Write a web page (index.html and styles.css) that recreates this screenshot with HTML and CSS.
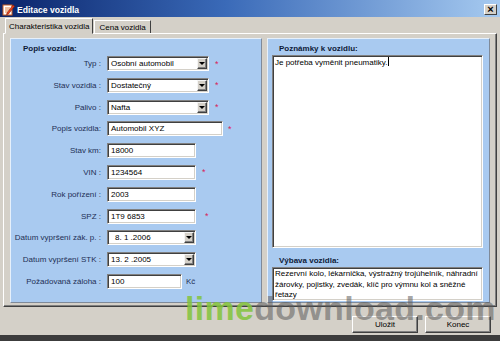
FILE: index.html
```html
<!DOCTYPE html>
<html>

<head>
  <meta charset="utf-8">
  <title>Editace vozidla</title>
  <link rel="stylesheet" href="styles.css">
</head>

<body>
  <div class="window">

    <!-- Title bar -->
    <div class="titlebar">
      <svg class="app-icon" width="13" height="13" viewBox="0 0 13 13">
        <rect x="1" y="2" width="9" height="10" fill="#fff" stroke="#c85a1e"/>
        <line x1="3" y1="5" x2="8" y2="5" stroke="#e08040"/>
        <line x1="3" y1="7" x2="8" y2="7" stroke="#e08040"/>
        <line x1="3" y1="9" x2="6" y2="9" stroke="#e08040"/>
        <path d="M5 10 L11 2 L12.5 3.2 L6.5 11 L4.5 11.8 Z" fill="#e8401c" stroke="#8a2008" stroke-width="0.6"/>
      </svg>
      <span class="title">Editace vozidla</span>
      <span class="close-btn">&times;</span>
    </div>

    <div class="client">
      <!-- Tabs -->
      <div class="tabs">
        <div class="tab active">Charakteristika vozidla</div>
        <div class="tab">Cena vozidla</div>
        <div class="tab-rest"></div>
      </div>

      <div class="tab-page">
        <!-- Left group: vehicle description -->
        <div class="group group-left">
          <div class="group-title">Popis vozidla:</div>
          <div class="form">
            <div class="row">
              <span class="lbl">Typ :</span>
              <div class="field combo w-combo"><span class="val">Osobní automobil</span><span class="drop"></span></div>
              <span class="req">*</span>
            </div>
            <div class="row">
              <span class="lbl">Stav vozidla :</span>
              <div class="field combo w-combo"><span class="val">Dostatečný</span><span class="drop"></span></div>
              <span class="req">*</span>
            </div>
            <div class="row">
              <span class="lbl">Palivo :</span>
              <div class="field combo w-combo"><span class="val">Nafta</span><span class="drop"></span></div>
              <span class="req">*</span>
            </div>
            <div class="row">
              <span class="lbl">Popis vozidla:</span>
              <div class="field w-long">Automobil XYZ</div>
              <span class="req req-near">*</span>
            </div>
            <div class="row">
              <span class="lbl">Stav km:</span>
              <div class="field w-short">18000</div>
            </div>
            <div class="row">
              <span class="lbl">VIN :</span>
              <div class="field w-short">1234564</div>
              <span class="req">*</span>
            </div>
            <div class="row">
              <span class="lbl">Rok pořízení :</span>
              <div class="field w-short">2003</div>
            </div>
            <div class="row">
              <span class="lbl">SPZ :</span>
              <div class="field w-short">1T9 6853</div>
              <span class="req req-far">*</span>
            </div>
            <div class="row">
              <span class="lbl">Datum vypršení zák. p. :</span>
              <div class="field combo w-short"><span class="val indent">8. 1 .2006</span><span class="drop"></span></div>
            </div>
            <div class="row">
              <span class="lbl">Datum vypršení STK :</span>
              <div class="field combo w-short"><span class="val">13. 2 .2005</span><span class="drop"></span></div>
            </div>
            <div class="row">
              <span class="lbl">Požadovaná záloha :</span>
              <div class="field w-money">100</div>
              <span class="unit">Kč</span>
            </div>
          </div>
        </div>

        <!-- Right group: notes and equipment -->
        <div class="group group-right">
          <div class="group-title">Poznámky k vozidlu:</div>
          <div class="field memo memo-notes">Je potřeba vyměnit pneumatiky.<span class="caret"></span></div>
          <div class="group-title title-equip">Výbava vozidla:</div>
          <div class="field memo memo-equip">Rezervní kolo, lékarnička, výstražný trojúhelník, náhradní<br>žárovky, pojistky, zvedák, klíč pro výmnu kol a sněžné<br>řetazy</div>
        </div>
      </div>

      <!-- Dialog buttons -->
      <div class="buttons">
        <div class="btn">Uložit</div>
        <div class="btn">Konec</div>
      </div>
    </div>

    <!-- Site watermark over the screenshot -->
    <div class="watermark"><span class="wm-lime">lime</span>download.com</div>
  </div>
</body>

</html>
```

FILE: styles.css
```css
body {
  margin: 0;
  padding: 0;
  font-family: 'Liberation Sans', Arial, sans-serif;
  font-size: 8px;
  background-color: #3c3c3c;
}

.window {
  position: relative;
  width: 500px;
  height: 335px;
  background-color: #d4d0c8;
  display: flex;
  flex-direction: column;
  overflow: hidden;
}

/* Title bar */
.titlebar {
  height: 17px;
  box-sizing: border-box;
  padding: 2px 3px 0 2px;
  display: flex;
  align-items: center;
  background: linear-gradient(to right, #0a246a, #3a6ab8 45%, #a6caf0);
}

.app-icon {
  margin-right: 2px;
}

.title {
  flex: 1;
  color: white;
  font-weight: bold;
  font-size: 8.6px;
}

.close-btn {
  width: 13px;
  height: 11px;
  box-sizing: border-box;
  background-color: #d4d0c8;
  border: 1px solid;
  border-color: #fff #404040 #404040 #fff;
  color: #000;
  font-weight: bold;
  font-size: 11px;
  line-height: 8px;
  text-align: center;
}

.client {
  flex: 1;
  padding: 1px 3px 0 3px;
  display: flex;
  flex-direction: column;
}

/* Tabs */
.tabs {
  display: flex;
  align-items: flex-end;
  height: 16px;
  padding-left: 2px;
}

.tab {
  height: 14px;
  box-sizing: border-box;
  padding: 0 4px;
  line-height: 13px;
  color: #000;
  border: 1px solid;
  border-color: #fff #404040 #fff #fff;
}

.tab.active {
  height: 16px;
  padding: 0 3px;
  line-height: 15px;
  margin-right: 1px;
  border-bottom-color: #d4d0c8;
  position: relative;
  z-index: 1;
}

.tab-rest {
  flex: 1;
  border-bottom: 1px solid #fff;
}

.tab-page {
  height: 274px;
  box-sizing: border-box;
  margin-top: -1px;
  border: 1px solid;
  border-color: #fff #404040 #404040 #fff;
  box-shadow: inset -1px -1px 0 #808080;
  padding: 4px 6px 3px 6px;
  display: flex;
  gap: 5px;
}

/* Blue group boxes */
.group {
  box-sizing: border-box;
  background-color: #a9caf0;
  border: 1px solid;
  border-color: #e6f0fb #7f8a99 #7f8a99 #e6f0fb;
  display: flex;
  flex-direction: column;
}

.group-left {
  width: 252px;
  padding-top: 5px;
}

.group-right {
  flex: 1;
  padding: 5px 6px 1px 4px;
}

.group-title {
  height: 10px;
  line-height: 10px;
  padding-left: 12px;
  font-weight: bold;
  color: #0e1a38;
}

.group-right .group-title {
  padding-left: 7px;
}

.title-equip {
  margin-top: 8px;
}

/* Form rows */
.form {
  margin-top: 2px;
  display: flex;
  flex-direction: column;
  gap: 6.8px;
}

.row {
  display: flex;
  align-items: center;
  height: 15px;
}

.lbl {
  width: 90px;
  margin-right: 6px;
  text-align: right;
  white-space: nowrap;
  color: #1e2f55;
}

.field {
  box-sizing: border-box;
  height: 15px;
  background-color: #fff;
  border: 1px solid;
  border-color: #808080 #fff #fff #808080;
  box-shadow: inset 1px 1px 0 #404040, inset -1px -1px 0 #d4d0c8;
  padding: 0 3px;
  line-height: 13px;
  white-space: nowrap;
  color: #000;
}

.combo {
  display: flex;
  align-items: center;
  padding-right: 1px;
}

.combo .val {
  flex: 1;
}

.combo .indent {
  padding-left: 4px;
}

.drop {
  width: 10px;
  height: 11px;
  box-sizing: border-box;
  background-color: #d4d0c8;
  border: 1px solid;
  border-color: #f4f4f4 #404040 #404040 #f4f4f4;
  box-shadow: inset -1px -1px 0 #808080;
  display: flex;
  align-items: center;
  justify-content: center;
}

.drop::after {
  content: "";
  border-left: 3px solid transparent;
  border-right: 3px solid transparent;
  border-top: 3px solid #000;
  margin-right: 1px;
}

.w-combo {
  width: 102px;
}

.w-long {
  width: 116px;
}

.w-short {
  width: 89px;
}

.w-money {
  width: 75px;
}

.req {
  margin-left: 6px;
  color: #d8245c;
  font-size: 9px;
}

.req-near {
  margin-left: 5px;
}

.req-far {
  margin-left: 9px;
}

.unit {
  margin-left: 4px;
  color: #1e2f55;
}

/* Memo boxes */
.memo {
  height: auto;
  line-height: 10.5px;
  padding: 1px 2px;
}

.memo-notes {
  margin-top: 1px;
  height: 193px;
}

.memo-equip {
  margin-top: 1px;
  height: 34px;
}

.caret {
  display: inline-block;
  width: 1px;
  height: 9px;
  margin-left: 1px;
  vertical-align: -1px;
  background-color: #000;
}

/* Buttons */
.buttons {
  display: flex;
  justify-content: flex-end;
  gap: 7px;
  padding: 9px 6px 0 0;
}

.btn {
  width: 66px;
  height: 17px;
  box-sizing: border-box;
  background-color: #d4d0c8;
  border: 1px solid;
  border-color: #fff #404040 #404040 #fff;
  box-shadow: inset -1px -1px 0 #808080;
  text-align: center;
  line-height: 15px;
  color: #000;
}

/* Watermark */
.watermark {
  position: absolute;
  left: 185px;
  top: 291px;
  font-size: 34px;
  line-height: 34px;
  font-weight: bold;
  letter-spacing: 0.3px;
  color: rgba(90, 90, 90, 0.55);
  white-space: nowrap;
  pointer-events: none;
}

.wm-lime {
  color: rgba(130, 196, 60, 0.85);
}
```
